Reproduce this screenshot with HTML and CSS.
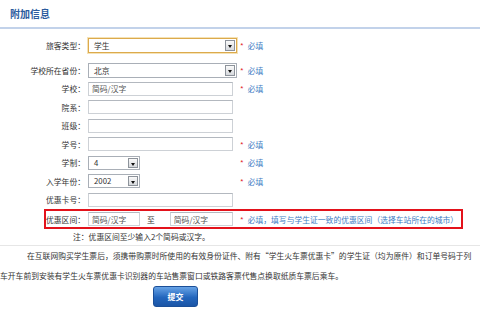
FILE: index.html
```html
<!DOCTYPE html>
<html lang="zh-CN">
<head>
    <meta charset="UTF-8">
    <title>附加信息</title>
    <link rel="stylesheet" href="styles.css">
</head>
<body>
    <h3 class="title">附加信息</h3>

    <div class="form">
        <div class="row first">
            <label>旅客类型：</label>
            <div class="field">
                <div class="select wide focus"><span>学生</span><i class="drop"></i></div>
            </div>
            <span class="req"><b>*</b>必填</span>
        </div>
        <div class="row">
            <label>学校所在省份：</label>
            <div class="field">
                <div class="select wide"><span>北京</span><i class="drop"></i></div>
            </div>
            <span class="req"><b>*</b>必填</span>
        </div>
        <div class="row">
            <label>学校：</label>
            <div class="field"><input type="text" class="text" value="简码/汉字"></div>
            <span class="req"><b>*</b>必填</span>
        </div>
        <div class="row">
            <label>院系：</label>
            <div class="field"><input type="text" class="text"></div>
        </div>
        <div class="row">
            <label>班级：</label>
            <div class="field"><input type="text" class="text"></div>
        </div>
        <div class="row">
            <label>学号：</label>
            <div class="field"><input type="text" class="text"></div>
            <span class="req"><b>*</b>必填</span>
        </div>
        <div class="row">
            <label>学制：</label>
            <div class="field">
                <div class="select short"><span>4</span><i class="drop"></i></div>
            </div>
            <span class="req"><b>*</b>必填</span>
        </div>
        <div class="row">
            <label>入学年份：</label>
            <div class="field">
                <div class="select short"><span>2002</span><i class="drop"></i></div>
            </div>
            <span class="req"><b>*</b>必填</span>
        </div>
        <div class="row">
            <label>优惠卡号：</label>
            <div class="field"><input type="text" class="text"></div>
        </div>
        <div class="row range">
            <label>优惠区间：</label>
            <div class="field">
                <input type="text" class="text from" value="简码/汉字">
                <span class="to">至</span>
                <input type="text" class="text dest" value="简码/汉字">
            </div>
            <span class="req"><b>*</b>必填，填写与学生证一致的优惠区间（选择车站所在的城市）</span>
        </div>
        <div class="note">注：优惠区间至少输入2个简码或汉字。</div>
    </div>

    <div class="info">
        <span class="indent">在互联网购买学生票后，须携带购票时所使用的有效身份证件、附有“学生火车票优惠卡”的学生证（均为原件）和订单号码于列</span><br>
        车开车前到安装有学生火车票优惠卡识别器的车站售票窗口或铁路客票代售点换取纸质车票后乘车。
    </div>

    <button type="submit" class="submit">提交</button>
</body>
</html>
```

FILE: styles.css
```css
body {
    margin: 0;
    width: 480px;
    height: 330px;
    overflow: hidden;
    background: #fff;
    color: #333;
    font-family: "Noto Sans CJK SC", "Liberation Sans", sans-serif;
    font-size: 7.8px;
}

.title {
    margin: 0;
    height: 27px;
    line-height: 27px;
    padding-left: 10px;
    font-size: 10px;
    font-weight: bold;
    color: #2c5c9e;
    border-bottom: 2px solid #c2d2ea;
}

.form {
    padding-top: 7px;
}

.row {
    display: flex;
    align-items: center;
    height: 18.5px;
}

.row.first {
    height: 18px;
    margin-bottom: 7px;
}

.row label {
    width: 85px;
    flex: none;
    text-align: right;
}

.field {
    width: 152px;
    flex: none;
    display: flex;
    align-items: center;
    padding-left: 3px;
}

.text {
    box-sizing: border-box;
    width: 145px;
    height: 14px;
    margin: 0;
    padding: 0 3px;
    border: 1px solid #cdd1d6;
    border-top-color: #b3b8bf;
    font-family: inherit;
    font-size: 7.8px;
    color: #555;
    outline: none;
}

.select {
    box-sizing: border-box;
    position: relative;
    height: 15px;
    line-height: 13px;
    padding-left: 5px;
    border: 1px solid #a9afb7;
    background: #fff;
}

.select.wide {
    width: 149px;
}

.select.short {
    width: 52px;
    height: 14px;
    line-height: 12px;
}

.select.focus {
    border-color: #dcaa4c;
    box-shadow: 0 0 0 1px #f5e2b6;
}

.drop {
    position: absolute;
    top: 1px;
    right: 1px;
    bottom: 1px;
    width: 10px;
    box-sizing: border-box;
    border: 1px solid #8d939b;
    background: linear-gradient(#fafafa, #d6d9dd);
}

.drop::after {
    content: "";
    position: absolute;
    left: 2px;
    top: 4px;
    border-left: 2px solid transparent;
    border-right: 2px solid transparent;
    border-top: 3px solid #111;
}

.req {
    color: #3c7dc4;
    white-space: nowrap;
}

.req b {
    color: #e2262c;
    font-weight: normal;
    margin-right: 4px;
}

.row.range {
    box-sizing: border-box;
    width: 419px;
    height: 20px;
    margin-left: 44px;
    border: 2px solid #e3121b;
}

.row.range label {
    width: 39px;
}

.text.from {
    width: 52px;
}

.to {
    margin-left: 7px;
    margin-right: 15px;
}

.text.dest {
    width: 63px;
}

.note {
    height: 16px;
    line-height: 16px;
    padding-left: 73px;
}

.info {
    border-top: 1px solid #e6e6e6;
    line-height: 20px;
    white-space: nowrap;
    overflow: hidden;
}

.indent {
    padding-left: 27px;
}

.submit {
    display: block;
    width: 45px;
    height: 21px;
    margin: 0 0 0 153px;
    padding: 0;
    border: 1px solid #1b4f98;
    border-radius: 3px;
    background: linear-gradient(#67a3e6, #2366bd 55%, #1b55a6);
    color: #fff;
    font-family: inherit;
    font-size: 8px;
    font-weight: bold;
    cursor: pointer;
}
```
